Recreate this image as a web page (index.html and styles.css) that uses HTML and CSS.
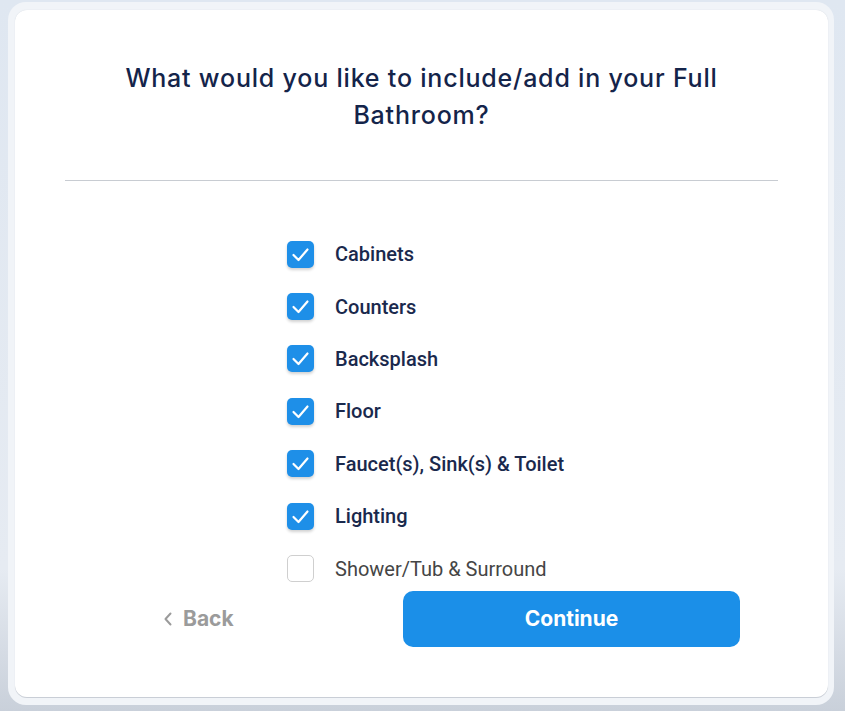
FILE: index.html
```html
<!DOCTYPE html>
<html lang="en">
<head>
<meta charset="utf-8">
<title>Full Bathroom</title>
<link rel="stylesheet" href="styles.css">
</head>
<body>
<div class="frame">
  <div class="card">
    <h1 class="title">What would you like to include/add in your Full Bathroom?</h1>
    <hr class="divider">
    <ul class="options">
      <li class="option checked"><span class="box"><svg viewBox="0 0 27 27" width="27" height="27"><path d="M6.5 14 L11.5 19 L20.5 8.5" fill="none" stroke="#fff" stroke-width="2.2" stroke-linecap="round" stroke-linejoin="round"/></svg></span><span class="label">Cabinets</span></li>
      <li class="option checked"><span class="box"><svg viewBox="0 0 27 27" width="27" height="27"><path d="M6.5 14 L11.5 19 L20.5 8.5" fill="none" stroke="#fff" stroke-width="2.2" stroke-linecap="round" stroke-linejoin="round"/></svg></span><span class="label">Counters</span></li>
      <li class="option checked"><span class="box"><svg viewBox="0 0 27 27" width="27" height="27"><path d="M6.5 14 L11.5 19 L20.5 8.5" fill="none" stroke="#fff" stroke-width="2.2" stroke-linecap="round" stroke-linejoin="round"/></svg></span><span class="label">Backsplash</span></li>
      <li class="option checked"><span class="box"><svg viewBox="0 0 27 27" width="27" height="27"><path d="M6.5 14 L11.5 19 L20.5 8.5" fill="none" stroke="#fff" stroke-width="2.2" stroke-linecap="round" stroke-linejoin="round"/></svg></span><span class="label">Floor</span></li>
      <li class="option checked"><span class="box"><svg viewBox="0 0 27 27" width="27" height="27"><path d="M6.5 14 L11.5 19 L20.5 8.5" fill="none" stroke="#fff" stroke-width="2.2" stroke-linecap="round" stroke-linejoin="round"/></svg></span><span class="label">Faucet(s), Sink(s) &amp; Toilet</span></li>
      <li class="option checked"><span class="box"><svg viewBox="0 0 27 27" width="27" height="27"><path d="M6.5 14 L11.5 19 L20.5 8.5" fill="none" stroke="#fff" stroke-width="2.2" stroke-linecap="round" stroke-linejoin="round"/></svg></span><span class="label">Lighting</span></li>
      <li class="option"><span class="box"></span><span class="label">Shower/Tub &amp; Surround</span></li>
    </ul>
    <div class="actions">
      <button class="back"><svg class="chev" viewBox="0 0 10 16" width="10" height="16"><path d="M7.5 2.5 L2.5 8 L7.5 13.5" fill="none" stroke="#9b9b9b" stroke-width="2" stroke-linecap="round" stroke-linejoin="round"/></svg><span>Back</span></button>
      <button class="continue">Continue</button>
    </div>
  </div>
</div>
</body>
</html>
```

FILE: styles.css
```css
html, body {
  margin: 0;
  padding: 0;
}
body {
  width: 845px;
  height: 711px;
  overflow: hidden;
  background: linear-gradient(180deg, #dfe7f1 0%, #e6ebf2 80%, #c9d0da 100%);
  font-family: "Inter", "Liberation Sans", sans-serif;
}
.frame {
  margin: 2px 11px 0 8px;
  padding: 8px 6px 8px 7px;
  background: #f1f4f8;
  border-radius: 18px;
}
.card {
  background: #ffffff;
  border-radius: 12px;
  box-shadow: 0 1px 0 #c9ced6, 0 0 1px rgba(150,160,175,0.4);
  padding: 50px 50px 50px;
  height: 687px;
  box-sizing: border-box;
}
.title {
  margin: 0 auto;
  max-width: 640px;
  text-align: center;
  font-family: "Inter", "Liberation Sans", sans-serif;
  font-weight: 500;
  font-size: 25px;
  letter-spacing: 0.8px;
  line-height: 37px;
  color: #14244a;
}
.divider {
  border: 0;
  height: 1px;
  background: #c8ccd2;
  margin: 46px 0 0;
}
.options {
  list-style: none;
  margin: 47px 0 0;
  padding: 0 0 0 222px;
}
.option {
  display: flex;
  align-items: center;
  height: 52.4px;
}
.box {
  width: 27px;
  height: 27px;
  box-sizing: border-box;
  border-radius: 5px;
  border: 1px solid #cfcfcf;
  background: #fff;
  flex: none;
  display: block;
}
.box svg {
  display: block;
}
.option.checked .box {
  border: 0;
  background: #1e8fe8;
  box-shadow: 0 2px 3px rgba(0,0,0,0.18);
}
.label {
  margin-left: 21px;
  font-family: "Roboto", "Liberation Sans", sans-serif;
  font-size: 20px;
  color: #454545;
  white-space: nowrap;
}
.option.checked .label {
  color: #1a294d;
  font-weight: 500;
}
.actions {
  display: flex;
  align-items: center;
  margin-top: -4px;
}
.back {
  margin-left: 98px;
  display: flex;
  align-items: center;
  gap: 10px;
  background: none;
  border: 0;
  padding: 0;
  font-family: "Inter", "Liberation Sans", sans-serif;
  font-weight: 700;
  font-size: 21px;
  color: #9b9b9b;
}
.chev {
  display: block;
}
.continue {
  margin-left: auto;
  margin-right: 38px;
  width: 337px;
  height: 56px;
  border: 0;
  border-radius: 10px;
  background: #1b8fe8;
  color: #fff;
  font-family: "Inter", "Liberation Sans", sans-serif;
  font-weight: 700;
  font-size: 21px;
}
```
